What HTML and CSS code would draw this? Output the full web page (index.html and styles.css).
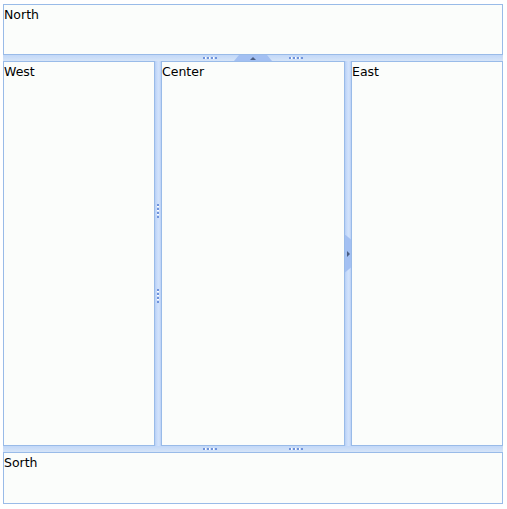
FILE: index.html
```html
<!DOCTYPE html>
<html lang="en">
<head>
  <meta charset="UTF-8">
  <title>Borderlayout</title>
  <link rel="stylesheet" href="styles.css">
</head>
<body>

<div class="layout">
  <div class="region north">North</div>

  <!-- north splitter -->
  <div class="splitter splitter-h split-north">
    <span class="dots dots-h"></span>
    <span class="collapse collapse-up"><span class="arrow arrow-up"></span></span>
    <span class="dots dots-h"></span>
  </div>

  <div class="region west">West</div>

  <div class="splitter splitter-v split-west">
    <span class="dots dots-v"></span>
    <span class="dots dots-v"></span>
  </div>

  <div class="region center">Center</div>

  <div class="splitter splitter-v split-east">
    <span class="collapse-side"><span class="arrow arrow-right"></span></span>
  </div>

  <div class="region east">East</div>

  <!-- south splitter -->
  <div class="splitter splitter-h split-south">
    <span class="dots dots-h"></span>
    <span class="spacer-h"></span>
    <span class="dots dots-h"></span>
  </div>

  <div class="region south">Sorth</div>
</div>

</body>
</html>
```

FILE: styles.css
```css
body {
  margin: 0;
  padding: 4px 0 0 3px;
  background: #ffffff;
  font-family: 'DejaVu Sans', Verdana, sans-serif;
  font-size: 12.5px;
  color: #000;
}
.layout {
  width: 500px;
  height: 500px;
  display: grid;
  grid-template-columns: 152px 6px 184px 6px 152px;
  grid-template-rows: 51px 6px 385px 6px 52px;
}
.region {
  background: #fbfdfb;
  border: 1px solid #99bbe8;
  line-height: 15px;
  padding: 2px 0 0 0;
  overflow: hidden;
}
.north { grid-column: 1 / 6; grid-row: 1; }
.west { grid-column: 1; grid-row: 3; }
.center { grid-column: 3; grid-row: 3; }
.east { grid-column: 5; grid-row: 3; }
.south { grid-column: 1 / 6; grid-row: 5; }

.splitter {
  display: flex;
  justify-content: center;
  align-items: center;
}
.splitter-h {
  background: linear-gradient(to bottom, #c2d8f8, #d6e5f8);
  gap: 17px;
}
.splitter-v {
  flex-direction: column;
  background: linear-gradient(to right, #b7cff5 0, #c9ddfb 2px, #d3e3fb 4px, #b9d0f6 100%);
  gap: 71px;
}
.split-north { grid-column: 1 / 6; grid-row: 2; }
.split-south { grid-column: 1 / 6; grid-row: 4; }
.split-west { grid-column: 2; grid-row: 3; }
.split-east { grid-column: 4; grid-row: 3; }

.dots-h {
  width: 14px;
  height: 2px;
  background: repeating-linear-gradient(to right, #6f93dc 0 2px, #ffffff 2px 3px, transparent 3px 4px);
}
.dots-v {
  width: 2px;
  height: 14px;
  background: repeating-linear-gradient(to bottom, #6f93dc 0 2px, #ffffff 2px 3px, transparent 3px 4px);
}
.spacer-h { width: 38px; }

.collapse {
  width: 38px;
  height: 6px;
  background: #a3c0f2;
  clip-path: polygon(5px 0, 33px 0, 100% 100%, 0 100%);
  display: flex;
  justify-content: center;
  align-items: center;
}
.collapse-side {
  width: 6px;
  height: 38px;
  background: #a3c0f2;
  clip-path: polygon(0 0, 100% 5px, 100% 33px, 0 100%);
  display: flex;
  justify-content: center;
  align-items: center;
}
.arrow {
  width: 0;
  height: 0;
}
.arrow-up {
  border-left: 3px solid transparent;
  border-right: 3px solid transparent;
  border-bottom: 3px solid #4a5d82;
}
.arrow-right {
  border-top: 3px solid transparent;
  border-bottom: 3px solid transparent;
  border-left: 3px solid #4a5d82;
}
```
